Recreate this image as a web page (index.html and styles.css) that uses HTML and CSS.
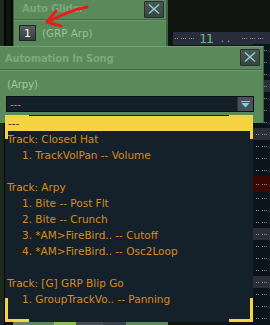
FILE: index.html
```html
<!DOCTYPE html>
<html lang="en">
<head>
  <meta charset="UTF-8">
  <title>Automation In Song</title>
  <link rel="stylesheet" href="styles.css">
</head>
<body>
  <div class="desk">
    <div class="rail"></div>

    <!-- ventana de atras -->
    <div class="win back">
      <div class="titlebar">
        <span class="title">Auto Glider</span>
        <span class="close"><svg width="12" height="10" viewBox="0 0 12 10"><path d="M1 0.5 L11 9.5 M11 0.5 L1 9.5" stroke="#8ad6d2" stroke-width="1.4"/></svg></span>
      </div>
      <div class="row">
        <span class="num">1</span>
        <span class="label">(GRP Arp)</span>
      </div>
    </div>

    <svg class="arrow" width="60" height="30" viewBox="0 0 60 30">
      <path d="M47 6 Q30 9 8 21" fill="none" stroke="#e41e1a" stroke-width="3" stroke-linecap="round"/>
      <path d="M16 10 L7 21 L21 25" fill="none" stroke="#e41e1a" stroke-width="3" stroke-linecap="round" stroke-linejoin="round"/>
    </svg>

    <div class="timebar">
      <span class="dots"><i class="d2"></i><i class="d3"></i><i class="d3"></i></span>
      <span class="bar-num">11</span>
      <span class="bar-sub">. .</span>
      <span class="dots right"><i class="d3"></i><i class="d3"></i><i class="d3"></i></span>
    </div>

    <div class="pattern">
      <div class="prow"><i class="d2"></i><i class="d3"></i></div>
      <div class="prow"><i class="d2"></i><i class="d3"></i></div>
      <div class="prow"><i class="d2"></i><i class="d3"></i></div>
      <div class="prow lit"><i class="d2"></i><i class="d3"></i></div>
      <div class="prow"><i class="d2"></i><i class="d3"></i></div>
      <div class="prow"><i class="d2"></i><i class="d3"></i></div>
      <div class="prow"><i class="d2"></i><i class="d3"></i></div>
      <div class="prow lit"><i class="d2"></i><i class="d3"></i></div>
      <div class="prow"><i class="d2"></i><i class="d3"></i></div>
      <div class="prow"><i class="d2"></i><i class="d3"></i></div>
      <div class="prow"><i class="d2"></i><i class="d3"></i></div>
      <div class="prow red tall"><i class="d2"></i><i class="d3"></i></div>
      <div class="prow"><i class="d2"></i><i class="d3"></i></div>
      <div class="prow"><i class="d2"></i><i class="d3"></i></div>
      <div class="prow"><i class="d2"></i><i class="d3"></i></div>
      <div class="prow lit"><i class="d2"></i><i class="d3"></i></div>
      <div class="prow"><i class="d2"></i><i class="d3"></i></div>
      <div class="prow"><i class="d2"></i><i class="d3"></i></div>
      <div class="prow"><i class="d2"></i><i class="d3"></i></div>
      <div class="prow lit"><i class="d2"></i><i class="d3"></i></div>
      <div class="prow"><i class="d2"></i><i class="d3"></i></div>
      <div class="prow"><i class="d2"></i><i class="d3"></i></div>
      <div class="prow"><i class="d2"></i><i class="d3"></i></div>
    </div>

    <div class="clips">
      <span class="clip c1"></span>
      <span class="clip c2"></span>
      <span class="clip c3"></span>
      <span class="clip c4"></span>
      <span class="clip c5"></span>
    </div>

    <!-- ventana principal -->
    <div class="win front">
      <div class="titlebar">
        <span class="title">Automation In Song</span>
        <span class="close"><svg width="12" height="10" viewBox="0 0 12 10"><path d="M1 0.5 L11 9.5 M11 0.5 L1 9.5" stroke="#8ad6d2" stroke-width="1.4"/></svg></span>
      </div>
      <div class="content">
        <div class="caption">(Arpy)</div>
        <div class="combo">
          <span class="combo-text">---</span>
          <span class="combo-btn"><svg width="9" height="7" viewBox="0 0 9 7"><path d="M0 0.5 H9" stroke="#7fd0d6" stroke-width="1"/><path d="M0.5 2 H8.5 L4.5 6.5 Z" fill="#7fd0d6"/></svg></span>
        </div>
      </div>
    </div>

    <div class="list">
      <div class="item sel">---</div>
      <div class="item track">Track: Closed Hat</div>
      <div class="item sub">1. TrackVolPan -- Volume</div>
      <div class="item blank"></div>
      <div class="item track">Track: Arpy</div>
      <div class="item sub">1. Bite -- Post Flt</div>
      <div class="item sub">2. Bite -- Crunch</div>
      <div class="item sub">3. *AM&gt;FireBird.. -- Cutoff</div>
      <div class="item sub">4. *AM&gt;FireBird.. -- Osc2Loop</div>
      <div class="item blank"></div>
      <div class="item track">Track: [G] GRP Blip Go</div>
      <div class="item sub">1. GroupTrackVo.. -- Panning</div>
      <span class="corner tl"></span>
      <span class="corner tr"></span>
      <span class="corner bl"></span>
      <span class="corner br"></span>
    </div>
  </div>
</body>
</html>
```

FILE: styles.css
```css
* {
  box-sizing: border-box;
}
body {
  margin: 0;
  background: #101510;
  font-family: "DejaVu Sans", sans-serif;
  font-size: 10px;
}
.desk {
  position: relative;
  width: 270px;
  height: 325px;
  overflow: hidden;
  background: #101510;
}
.rail {
  position: absolute;
  left: 0;
  top: 0;
  width: 13px;
  height: 100%;
  background: linear-gradient(to right, #1c2a1e 0 4px, #040604 4px 6px, #0e130e 6px 11px, #050805 11px 13px);
}

/* ventanas */
.win {
  position: absolute;
  background: #5a8a5a;
}
.titlebar {
  display: flex;
  align-items: center;
  justify-content: space-between;
  border-bottom: 1px solid #44694a;
  box-shadow: 0 1px 0 #6a9a6a;
}
.title {
  color: #80a680;
  font-weight: bold;
  font-size: 10px;
  letter-spacing: -0.2px;
}
.close {
  display: flex;
  align-items: center;
  justify-content: center;
  width: 20px;
  height: 17px;
  background: linear-gradient(#4b5655, #3a4443);
  border: 1px solid #263030;
  border-radius: 1px;
}

.back {
  left: 13px;
  top: -2px;
  width: 155px;
  height: 48px;
  border-left: 1px solid #3e603e;
  border-right: 2px solid #3e603e;
}
.back .titlebar {
  height: 22px;
  padding: 0 2px 0 8px;
}
.back .close {
  margin-top: 1px;
}
.row {
  display: flex;
  align-items: center;
  gap: 6px;
  padding: 5px 0 0 5px;
}
.num {
  display: flex;
  align-items: center;
  justify-content: center;
  width: 17px;
  height: 16px;
  background: linear-gradient(#58605f, #353d3d);
  border: 1px solid #1e2626;
  color: #ffffff;
  font-size: 11px;
}
.label {
  color: #9cbf9c;
  font-size: 10.3px;
}

.arrow {
  position: absolute;
  left: 40px;
  top: 1px;
}

/* barra de compases */
.timebar {
  position: absolute;
  left: 173px;
  top: 32px;
  width: 97px;
  height: 13px;
  background: #282d3b;
  display: flex;
  align-items: center;
  padding-left: 2px;
}
.dots {
  display: flex;
  gap: 3px;
  align-items: center;
}
.dots.right {
  margin-left: auto;
  margin-right: 7px;
}
i.d2, i.d3 {
  display: block;
  height: 1px;
  border-top: 1px dotted #8a8f99;
}
i.d2 {
  width: 3px;
}
i.d3 {
  width: 5px;
}
.bar-num {
  margin-left: 5px;
  color: #72b672;
  font-family: "DejaVu Sans Mono", monospace;
  font-size: 13px;
  letter-spacing: -1px;
  line-height: 13px;
}
.bar-sub {
  margin-left: 8px;
  color: #b0b4bb;
  font-size: 10px;
  line-height: 10px;
}

/* patron a la derecha */
.pattern {
  position: absolute;
  left: 253px;
  top: 44px;
  width: 17px;
  bottom: 0;
  background: #0b131c;
  display: flex;
  flex-direction: column;
}
.prow {
  height: 12px;
  display: flex;
  align-items: center;
  gap: 3px;
  padding-left: 3px;
}
.prow.lit {
  background: #2b2f37;
}
.prow.red {
  background: #3a0904;
}
.prow.tall {
  height: 16px;
}

.clips {
  position: absolute;
  left: 13px;
  top: 322px;
  display: flex;
  height: 3px;
}
.clip {
  display: block;
  height: 3px;
}
.c1 { width: 41px; background: #5a8a5a; }
.c2 { width: 22px; background: #8cc04e; }
.c3 { width: 27px; background: #444c54; }
.c4 { width: 23px; background: #3b434b; }
.c5 { width: 42px; background: #5a8a5a; }

.front {
  left: 0;
  top: 46px;
  width: 264px;
  height: 77px;
  border-top: 1px solid #71a071;
  border-right: 1px solid #3e603e;
}
.front .titlebar {
  height: 23px;
  padding: 0 3px 0 5px;
}
.front .close {
  margin-top: -2px;
}
.content {
  padding: 9px 9px 0 6px;
}
.caption {
  color: #a6c6a6;
  padding-left: 1px;
  line-height: 12px;
}
.combo {
  margin-top: 5px;
  height: 16px;
  display: flex;
  align-items: center;
  background: #13202a;
  border: 1px solid #0a1218;
}
.combo-text {
  flex: 1;
  padding-left: 3px;
  color: #d88b1d;
}
.combo-btn {
  display: flex;
  align-items: center;
  justify-content: center;
  width: 16px;
  height: 100%;
  background: #46515a;
  border-left: 1px solid #2a333b;
}

/* lista desplegable */
.list {
  position: absolute;
  left: 5px;
  top: 115px;
  width: 248px;
  height: 207px;
  background: #14212b;
  font-size: 10.5px;
}
.item {
  height: 16px;
  line-height: 16px;
  color: #d88b1d;
  white-space: nowrap;
}
.item.sel {
  background: #f6d340;
  color: #2b2b25;
  padding-left: 3px;
  margin-top: 1px;
  height: 15px;
  line-height: 14px;
}
.item.track {
  padding-left: 2px;
}
.item.sub {
  padding-left: 17px;
}
.corner {
  position: absolute;
  width: 24px;
  height: 24px;
  border: 0 solid #f6d340;
}
.corner.tl { left: 0; top: 0; border-top-width: 3px; border-left-width: 3px; }
.corner.tr { right: 0; top: 0; border-top-width: 3px; border-right-width: 3px; }
.corner.bl { left: 0; bottom: 0; border-bottom-width: 3px; border-left-width: 3px; }
.corner.br { right: 0; bottom: 0; border-bottom-width: 3px; border-right-width: 3px; }
```
